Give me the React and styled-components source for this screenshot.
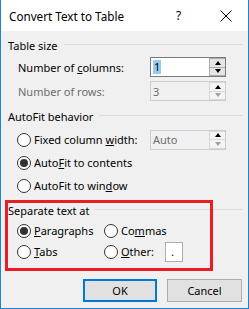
import styled, { createGlobalStyle } from "styled-components";

const Global = createGlobalStyle`
  body {
    margin: 0;
    font-family: "Noto Sans", "Open Sans", sans-serif;
    font-size: 11px;
    color: #000;
  }
`;

function Radio({ checked, children }) {
  return (
    <Option>
      <Dot checked={checked} />
      <span>{children}</span>
    </Option>
  );
}

function Spin({ value, disabled, selected }) {
  return (
    <SpinBox disabled={disabled}>
      <SpinText disabled={disabled}>
        {selected ? <Selected>{value}</Selected> : value}
      </SpinText>
      <Arrows>
        <ArrowBtn disabled={disabled}>
          <Tri up />
        </ArrowBtn>
        <ArrowBtn disabled={disabled}>
          <Tri faded={disabled} />
        </ArrowBtn>
      </Arrows>
    </SpinBox>
  );
}

export default function App() {
  return (
    <>
      <Global />
      <Window>
        <TitleBar>
          <Title>Convert Text to Table</Title>
          <Help>?</Help>
          <Close width="12" height="12" viewBox="0 0 12 12">
            <path d="M0.5 0.5 L11.5 11.5 M11.5 0.5 L0.5 11.5" stroke="#000" strokeWidth="1" />
          </Close>
        </TitleBar>
        <Body>
          <Legend>Table size</Legend>
          <Row first>
            <Label>Number of <u>c</u>olumns:</Label>
            <Spin value="1" selected />
          </Row>
          <Row>
            <Label disabled>Number of rows:</Label>
            <Spin value="3" disabled />
          </Row>

          <Legend top={4}>AutoFit behavior</Legend>
          <RadioRow first>
            <Radio>Fixed column <u>w</u>idth:</Radio>
            <Spin value="Auto" disabled />
          </RadioRow>
          <RadioRow>
            <Radio checked>Auto<u>F</u>it to contents</Radio>
          </RadioRow>
          <RadioRow>
            <Radio>AutoFit to win<u>d</u>ow</Radio>
          </RadioRow>

          <Group>
            <Legend top={0}>Separate text at</Legend>
            <PairRow first>
              <Cell>
                <Radio checked><u>P</u>aragraphs</Radio>
              </Cell>
              <Cell last>
                <Radio>Co<u>m</u>mas</Radio>
              </Cell>
            </PairRow>
            <PairRow>
              <Cell>
                <Radio><u>T</u>abs</Radio>
              </Cell>
              <Cell last>
                <Radio><u>O</u>ther:</Radio>
                <CharBox>.</CharBox>
              </Cell>
            </PairRow>
            <Highlight />
          </Group>

          <Footer>
            <Button primary>OK</Button>
            <Button>Cancel</Button>
          </Footer>
        </Body>
      </Window>
    </>
  );
}

const Window = styled.div`
  box-sizing: border-box;
  width: 249px;
  height: 309px;
  border: 1px solid #1883d7;
  border-top: none;
  display: flex;
  flex-direction: column;
  background: #f0f0f0;
`;

const TitleBar = styled.div`
  height: 31px;
  background: #fff;
  display: flex;
  align-items: center;
  padding-left: 8px;
`;

const Title = styled.div`
  font-size: 11.7px;
  flex: 1;
`;

const Help = styled.div`
  font-size: 12px;
  width: 8px;
  margin-right: 36px;
`;

const Close = styled.svg`
  margin-right: 16px;
`;

const Body = styled.div`
  flex: 1;
  display: flex;
  flex-direction: column;
  padding: 0 5px 0 7px;
`;

const Legend = styled.div`
  display: flex;
  align-items: center;
  height: 18px;
  margin-top: ${(p) => (p.top ?? 5)}px;
  white-space: nowrap;
  &::after {
    content: "";
    flex: 1;
    height: 1px;
    background: #dcdcdc;
    margin-left: 6px;
    margin-top: -1px;
  }
`;

const Row = styled.div`
  display: flex;
  align-items: center;
  height: 24px;
  padding-left: 10px;
  margin-top: ${(p) => (p.first ? 1 : 0)}px;
`;

const Label = styled.div`
  width: 132px;
  color: ${(p) => (p.disabled ? "#6d6d6d" : "#000")};
`;

const RadioRow = styled.div`
  display: flex;
  align-items: center;
  height: 23px;
  padding-left: 9px;
  margin-top: ${(p) => (p.first ? 3 : 0)}px;
`;

const Option = styled.div`
  display: flex;
  align-items: center;
  width: 133px;
  white-space: nowrap;
`;

const Dot = styled.div`
  box-sizing: border-box;
  width: 14px;
  height: 14px;
  border-radius: 50%;
  border: 1px solid #333;
  background: #fff;
  margin-right: 3px;
  display: flex;
  align-items: center;
  justify-content: center;
  &::after {
    content: "";
    display: ${(p) => (p.checked ? "block" : "none")};
    width: 8px;
    height: 8px;
    border-radius: 50%;
    background: #333;
  }
`;

const SpinBox = styled.div`
  box-sizing: border-box;
  width: 76px;
  height: 20px;
  display: flex;
  border: 1px solid ${(p) => (p.disabled ? "#cccccc" : "#7a7a7a")};
  background: ${(p) => (p.disabled ? "#f0f0f0" : "#fff")};
`;

const SpinText = styled.div`
  flex: 1;
  display: flex;
  align-items: center;
  padding-left: 2px;
  color: ${(p) => (p.disabled ? "#6d6d6d" : "#000")};
`;

const Selected = styled.span`
  background: #99c9ef;
  padding: 0 1px;
  line-height: 14px;
`;

const Arrows = styled.div`
  width: 16px;
  display: flex;
  flex-direction: column;
`;

const ArrowBtn = styled.div`
  box-sizing: border-box;
  flex: 1;
  border: 1px solid ${(p) => (p.disabled ? "#d9d9d9" : "#adadad")};
  border-right: none;
  background: ${(p) => (p.disabled ? "#f4f4f4" : "#e5e5e5")};
  display: flex;
  align-items: center;
  justify-content: center;
  & + & {
    border-top: none;
  }
`;

const Tri = styled.div`
  width: 0;
  height: 0;
  border-left: 3px solid transparent;
  border-right: 3px solid transparent;
  ${(p) =>
    p.up
      ? "border-bottom: 4px solid #000;"
      : `border-top: 4px solid ${p.faded ? "#a0a0a0" : "#000"};`}
`;

const Group = styled.div`
  position: relative;
  margin-top: 4px;
`;

const PairRow = styled.div`
  display: flex;
  align-items: center;
  height: 21px;
  padding-left: 9px;
  margin-top: ${(p) => (p.first ? 1 : 0)}px;
`;

const Cell = styled.div`
  display: flex;
  align-items: center;
  width: ${(p) => (p.last ? "auto" : "87px")};
  & > ${Option} {
    width: auto;
  }
`;

const CharBox = styled.div`
  box-sizing: border-box;
  width: 18px;
  height: 20px;
  margin-left: 11px;
  background: #fff;
  border: 1px solid #adadad;
  display: flex;
  align-items: center;
  padding-left: 5px;
`;

const Highlight = styled.div`
  position: absolute;
  left: -3px;
  top: -1px;
  width: 208px;
  height: 71px;
  box-sizing: border-box;
  border: 3px solid #ec1c24;
  pointer-events: none;
`;

const Footer = styled.div`
  margin-top: auto;
  display: flex;
  justify-content: flex-end;
  gap: 10px;
  padding: 0 1px 6px 0;
`;

const Button = styled.div`
  box-sizing: border-box;
  width: ${(p) => (p.primary ? 74 : 75)}px;
  height: 23px;
  display: flex;
  align-items: center;
  justify-content: center;
  background: #e1e1e1;
  border: ${(p) => (p.primary ? "2px solid #0078d7" : "1px solid #adadad")};
`;
